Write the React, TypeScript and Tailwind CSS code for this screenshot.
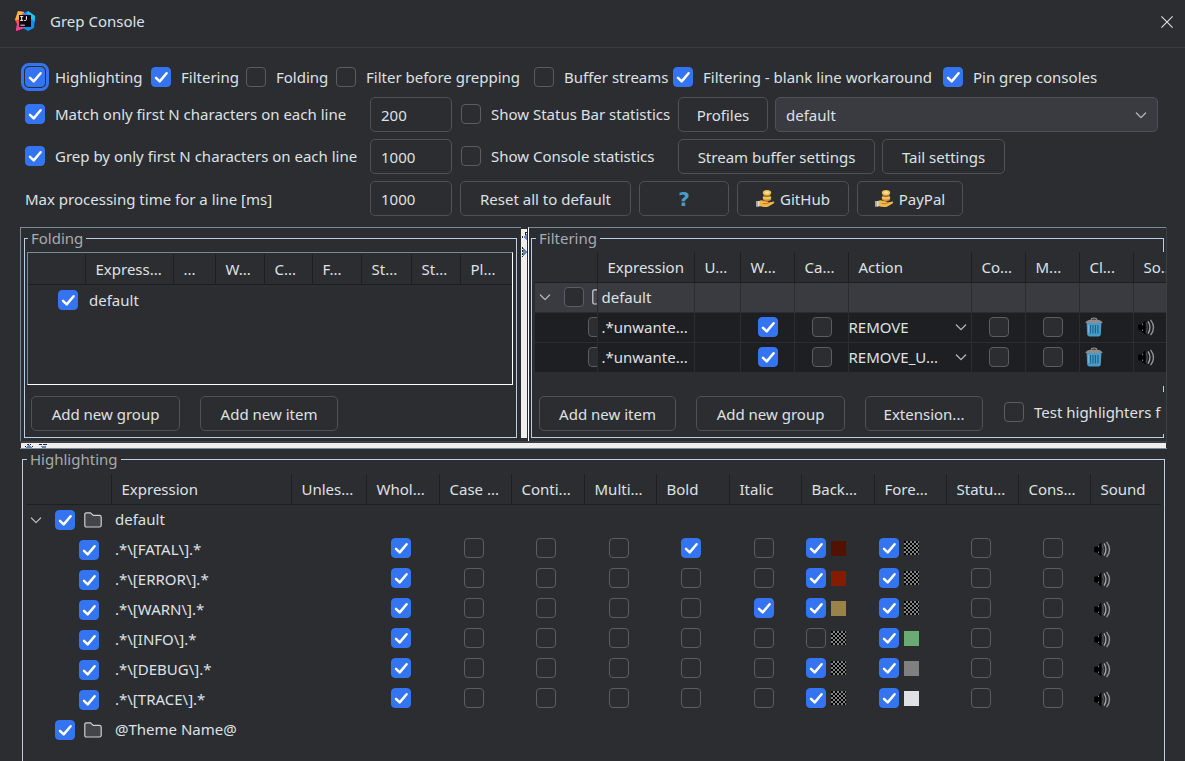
import React from "react";

type CheckProps = {
  label: string;
  checked?: boolean;
  focused?: boolean;
  id?: string;
};

function Check({ label, checked = false, focused = false, id }: CheckProps) {
  return (
    <span className="inline-grid size-5 shrink-0 align-middle">
      <input
        id={id}
        type="checkbox"
        aria-label={id ? undefined : label}
        defaultChecked={checked}
        className={`peer col-start-1 row-start-1 size-5 appearance-none rounded-[4px] border border-[#5a5d63] bg-[#2b2d30] checked:border-[#3574f0] checked:bg-[#3574f0] ${
          focused ? "outline-[3px] outline-offset-1 outline-[#3574f0]" : "outline-none"
        }`}
      />
      <svg
        viewBox="0 0 20 20"
        className="pointer-events-none col-start-1 row-start-1 hidden size-5 peer-checked:block"
        fill="none"
        stroke="#fff"
        strokeWidth="2.5"
        strokeLinecap="round"
        strokeLinejoin="round"
      >
        <path d="M5 10.8 L8.7 14.4 L15.6 6.2" />
      </svg>
    </span>
  );
}

function Option({ id, label, checked, focused }: { id: string; label: string; checked?: boolean; focused?: boolean }) {
  return (
    <div className="flex items-center gap-2.5 whitespace-nowrap">
      <Check id={id} label={label} checked={checked} focused={focused} />
      <label htmlFor={id}>{label}</label>
    </div>
  );
}

function Btn({ className = "", children, label }: { className?: string; children: React.ReactNode; label?: string }) {
  return (
    <button
      type="button"
      aria-label={label}
      className={`flex h-[35px] shrink-0 items-center justify-center gap-1 whitespace-nowrap rounded-[5px] border border-[#4e5157] ${className}`}
    >
      {children}
    </button>
  );
}

function NumberField({ label, value, id }: { label?: string; value: string; id?: string }) {
  return (
    <input
      id={id}
      type="text"
      aria-label={label}
      defaultValue={value}
      className="h-[35px] w-[82px] shrink-0 rounded-[5px] border border-[#4e5157] bg-[#2b2d30] px-2.5 outline-none"
    />
  );
}

function Chevron() {
  return (
    <svg viewBox="0 0 12 12" className="size-3 shrink-0" fill="none" stroke="#b4b8bf" strokeWidth="1.3" strokeLinecap="round" strokeLinejoin="round">
      <path d="M1.4 4 L6 8.6 L10.6 4" />
    </svg>
  );
}

function Folder() {
  return (
    <svg viewBox="0 0 18 16" className="h-4 w-[18px] shrink-0" fill="#43454a" stroke="#ced0d6" strokeWidth="1.2" strokeLinejoin="round">
      <path d="M0.8 2.6 Q0.8 0.8 2.6 0.8 H6.3 L9.2 3.4 H15.4 Q17.2 3.4 17.2 5.2 V13.2 Q17.2 15 15.4 15 H2.6 Q0.8 15 0.8 13.2 Z" />
    </svg>
  );
}

function Speaker() {
  return (
    <svg viewBox="0 0 17 17" className="size-[17px]" fill="none">
      <path d="M0.2 6.4 Q0.2 5.6 1 5.6 H3 L7.4 1.4 V15.6 L3 11.4 H1 Q0.2 11.4 0.2 10.6 Z" fill="#000" />
      <path d="M4.6 4.6 V6.2 M4.6 10.6 V12" stroke="#8a8c8f" strokeWidth="1" />
      <path d="M8.4 3.6 Q10.4 8.5 8.4 13.4" stroke="#55575a" strokeWidth="1" />
      <path d="M10 2.4 Q14 8.5 10 14.6" stroke="#a4a6a8" strokeWidth="1.3" />
      <path d="M12.6 0.8 Q18.4 8.5 12.6 16.2" stroke="#909295" strokeWidth="1.4" />
    </svg>
  );
}

function Trash() {
  return (
    <svg viewBox="0 0 18 20" className="h-5 w-[18px]" fill="none">
      <path d="M6 2.6 Q6.4 1 9 1 Q11.6 1 12 2.6" stroke="#a7a39e" strokeWidth="1.2" />
      <path d="M0.3 6 Q1.4 2.6 9 2.6 Q16.6 2.6 17.7 6 Z" fill="#8f8c89" />
      <path d="M1.6 6 H16.4 L15.8 17.6 Q15.6 19.4 13.8 19.4 H4.2 Q2.4 19.4 2.2 17.6 Z" fill="#4a9cc8" />
      <path d="M5.4 8 V16.6 M7.9 8 V16.6 M10.4 8 V16.6 M12.9 8 V16.6" stroke="#1d5f86" strokeWidth="1.1" />
      <path d="M3.8 8 V16" stroke="#86cdec" strokeWidth="0.8" />
    </svg>
  );
}

function Donate() {
  return (
    <svg viewBox="0 0 20 20" className="size-5 shrink-0" fill="none">
      <ellipse cx="11" cy="10" rx="4.2" ry="2" fill="#c98a2c" />
      <ellipse cx="11" cy="8.6" rx="4.2" ry="2" fill="#f2c260" />
      <ellipse cx="11" cy="6.4" rx="3.4" ry="1.6" fill="#a86f22" />
      <ellipse cx="11" cy="3.8" rx="4.2" ry="2.7" fill="#f0bd58" />
      <ellipse cx="11" cy="3.6" rx="2.4" ry="1.3" fill="#fbe09a" />
      <path d="M3 12 Q5.4 10.6 8 12 L12 12.4 Q13 13 11.8 13.8 L17.6 12.6 Q19 13 17.6 14.4 L12.4 17.4 Q9 18.6 3 17 Z" fill="#f0b64a" />
      <path d="M6.6 14.4 Q9.4 15.4 13 13.8" stroke="#b9761f" strokeWidth="0.9" />
      <path d="M0 12 H3.4 V17.6 H0 Z" fill="#d5d8dc" />
      <path d="M1 12 V17.6" stroke="#6d7074" strokeWidth="0.9" />
    </svg>
  );
}

function AppLogo() {
  return (
    <svg viewBox="0 0 20 20" className="size-5">
      <path d="M2 3 L3 0 L9 1 L14 10 L4 19 L1 20 L2 13 L0 9 Z" fill="#fc4a6c" />
      <path d="M2 3 L3 0 L9 1 L9 8 L0 9 Z" fill="#fdb43a" />
      <path d="M1 20 L2 13 L8 14 L10 17 Z" fill="#f93c93" />
      <path d="M7 3 L13 0 L20 5 L19 17 L13 20 L8 17 Z" fill="#0f8ff2" />
      <path d="M12 3 L13 0 L20 5 L19.6 11 Z" fill="#20c4f4" />
      <path d="M8 2 L12 4 L10 8 L6 6 Z" fill="#9a5fe0" />
      <rect x="4" y="4" width="12" height="12" fill="#0c0208" />
      <path d="M5.2 5.6 H8.2 M6.7 5.6 V9.4 M5.2 9.4 H8.2 M11.4 5.2 V8.4 Q11.4 9.5 10.2 9.5 H9.2" stroke="#fff" strokeWidth="1" fill="none" />
      <path d="M5.4 14.2 H9.8" stroke="#fff" strokeWidth="0.9" />
    </svg>
  );
}

function Swatch({ color }: { color: string | null }) {
  if (color === null) {
    return (
      <svg viewBox="0 0 15 15" className="size-[15px] shrink-0" shapeRendering="crispEdges">
        <defs>
          <pattern id="mesh" width="4" height="4" patternUnits="userSpaceOnUse">
            <rect width="4" height="4" fill="#828282" />
            <rect width="2" height="2" fill="#000" />
            <rect x="2" y="2" width="2" height="2" fill="#000" />
          </pattern>
        </defs>
        <rect width="15" height="14" fill="url(#mesh)" />
      </svg>
    );
  }
  return <span className="size-[15px] shrink-0" style={{ backgroundColor: color }} />;
}

const foldingColumns: [string, string][] = [
  ["", "w-[57px]"],
  ["Express...", "w-[88px]"],
  ["...", "w-[42px]"],
  ["W...", "w-[49px]"],
  ["C...", "w-[48px]"],
  ["F...", "w-[49px]"],
  ["St...", "w-[50px]"],
  ["St...", "w-[49px]"],
  ["Pl...", ""],
];

const filterColumns: [string, string][] = [
  ["", "w-[62px]"],
  ["Expression", "w-[97px]"],
  ["U...", "w-[46px]"],
  ["W...", "w-[54px]"],
  ["Ca...", "w-[54px]"],
  ["Action", "w-[123px]"],
  ["Co...", "w-[54px]"],
  ["M...", "w-[54px]"],
  ["Cl...", "w-[54px]"],
  ["So...", "w-[54px]"],
];

const highlightColumns: [string, string][] = [
  ["", "w-[85px]"],
  ["Expression", "w-[180px]"],
  ["Unles...", "w-[75px]"],
  ["Whol...", "w-[73px]"],
  ["Case ...", "w-[72px]"],
  ["Conti...", "w-[73px]"],
  ["Multi...", "w-[72px]"],
  ["Bold", "w-[73px]"],
  ["Italic", "w-[72px]"],
  ["Back...", "w-[73px]"],
  ["Fore...", "w-[72px]"],
  ["Statu...", "w-[72px]"],
  ["Cons...", "w-[72px]"],
  ["Sound", ""],
];

function HeaderRow({ columns }: { columns: [string, string][] }) {
  return (
    <thead>
      <tr className="h-[30px] border-b border-[#1e1f22]">
        {columns.map(([name, width], i) => (
          <th
            key={i}
            className={`${width} overflow-hidden whitespace-nowrap border-r border-[#1e1f22] pl-2.5 text-left font-normal last:border-r-0`}
          >
            {name}
          </th>
        ))}
      </tr>
    </thead>
  );
}

type Rule = { expr: string; bold?: boolean; italic?: boolean; bgOn: boolean; bg: string | null; fg: string | null };

const rules: Rule[] = [
  { expr: ".*\\[FATAL\\].*", bold: true, bgOn: true, bg: "#521200", fg: null },
  { expr: ".*\\[ERROR\\].*", bgOn: true, bg: "#851b00", fg: null },
  { expr: ".*\\[WARN\\].*", italic: true, bgOn: true, bg: "#9a8349", fg: null },
  { expr: ".*\\[INFO\\].*", bgOn: false, bg: null, fg: "#6aab73" },
  { expr: ".*\\[DEBUG\\].*", bgOn: true, bg: null, fg: "#808080" },
  { expr: ".*\\[TRACE\\].*", bgOn: true, bg: null, fg: "#dfe1e5" },
];

function CenterCheck({ label, checked }: { label: string; checked?: boolean }) {
  return (
    <td className="pb-0.5 pr-[3px]">
      <div className="flex justify-center">
        <Check label={label} checked={checked} />
      </div>
    </td>
  );
}

function RuleRow({ rule }: { rule: Rule }) {
  return (
    <tr className="h-[30px]">
      <td className="pl-[53px] pt-0.5">
        <div className="flex">
          <Check label={`${rule.expr} enabled`} checked />
        </div>
      </td>
      <td className="pl-1">{rule.expr}</td>
      <td />
      <CenterCheck label="Whole line" checked />
      <CenterCheck label="Case insensitive" />
      <CenterCheck label="Continue matching" />
      <CenterCheck label="Multiline" />
      <CenterCheck label="Bold" checked={rule.bold} />
      <CenterCheck label="Italic" checked={rule.italic} />
      <td className="pb-0.5 pl-[5px]">
        <div className="flex items-center gap-[5px]">
          <Check label="Background" checked={rule.bgOn} />
          <Swatch color={rule.bg} />
        </div>
      </td>
      <td className="pb-0.5 pl-[5px]">
        <div className="flex items-center gap-[5px]">
          <Check label="Foreground" checked />
          <Swatch color={rule.fg} />
        </div>
      </td>
      <CenterCheck label="Status bar count" />
      <CenterCheck label="Console count" />
      <td className="pl-1">
        <Speaker />
      </td>
    </tr>
  );
}

function GroupRow({ name, open }: { name: string; open?: boolean }) {
  return (
    <tr className="h-[30px]">
      <td className="pl-1 pt-0.5">
        <div className="flex items-center">
          <span className="mr-[13px] flex w-3">{open && <Chevron />}</span>
          <Check label={`${name} enabled`} checked />
          <span className="ml-[9px]">
            <Folder />
          </span>
        </div>
      </td>
      <td className="pl-1" colSpan={13}>
        {name}
      </td>
    </tr>
  );
}

function FilterCheck({ label, checked }: { label: string; checked?: boolean }) {
  return (
    <td className="border-b border-r border-[#2b2d30] pl-0.5">
      <div className="flex justify-center">
        <Check label={label} checked={checked} />
      </div>
    </td>
  );
}

function FilterRow({ action }: { action: string }) {
  const cell = "border-b border-r border-[#2b2d30]";
  return (
    <tr className="h-[30px] bg-[#1e1f22]">
      <td className={`${cell} overflow-hidden`}>
        <div className="flex overflow-hidden pl-[53px]">
          <Check label="Filter enabled" />
        </div>
      </td>
      <td className={`${cell} pl-1`}>.*unwante...</td>
      <td className={cell} />
      <FilterCheck label="Whole line" checked />
      <FilterCheck label="Case insensitive" />
      <td className={cell}>
        <div className="grid items-center">
          <select
            aria-label="Action"
            className="col-start-1 row-start-1 w-full appearance-none bg-transparent outline-none"
            defaultValue={action}
          >
            <option className="bg-[#2b2d30]">{action}</option>
          </select>
          <span className="pointer-events-none col-start-1 row-start-1 mr-1 justify-self-end">
            <Chevron />
          </span>
        </div>
      </td>
      <FilterCheck label="Continue matching" />
      <FilterCheck label="Multiline" />
      <td className={`${cell} pl-[5px]`}>
        <Trash />
      </td>
      <td className={`${cell} pl-1`}>
        <Speaker />
      </td>
    </tr>
  );
}

export default function App() {
  return (
    <div className="flex h-screen flex-col overflow-hidden bg-[#2b2d30] font-['Noto_Sans','Open_Sans',sans-serif] text-[15px] leading-5 text-[#dfe1e5]">
      <header className="flex h-12 shrink-0 items-center border-b border-[#393b40] pb-1.5 pl-[15px] pr-3">
        <AppLogo />
        <h1 className="ml-[15px] flex-1">Grep Console</h1>
        <button type="button" aria-label="Close" className="flex pt-0.5">
          <svg viewBox="0 0 12 12" className="size-3" stroke="#dfe1e5" strokeWidth="1.1">
            <path d="M0.4 0.4 L11.6 11.6 M11.6 0.4 L0.4 11.6" />
          </svg>
        </button>
      </header>

      <section className="flex shrink-0 flex-col gap-[7px] pb-[11px] pl-[25px] pr-[27px] pt-[19px]">
        <div className="mb-[3px] grid grid-cols-[126px_95px_90px_198px_139px_270px_1fr]">
          <Option id="highlighting" label="Highlighting" checked focused />
          <Option id="filtering" label="Filtering" checked />
          <Option id="folding" label="Folding" />
          <Option id="before" label="Filter before grepping" />
          <Option id="buffer" label="Buffer streams" />
          <Option id="blank" label="Filtering - blank line workaround" checked />
          <Option id="pin" label="Pin grep consoles" checked />
        </div>

        <div className="flex items-center">
          <div className="w-[345px] shrink-0 pb-0.5">
            <Option id="match" label="Match only first N characters on each line" checked />
          </div>
          <NumberField label="Match characters" value="200" />
          <div className="ml-[9px] w-[217px] shrink-0 pb-0.5">
            <Option id="statusbar" label="Show Status Bar statistics" />
          </div>
          <Btn className="w-[90px]">Profiles</Btn>
          <div className="ml-[7px] grid min-w-0 flex-1 items-center">
            <select
              aria-label="Profile"
              defaultValue="default"
              className="col-start-1 row-start-1 h-[35px] w-full appearance-none rounded-[5px] border border-[#4e5157] bg-[#393b40] px-2.5 outline-none"
            >
              <option>default</option>
            </select>
            <span className="pointer-events-none col-start-1 row-start-1 mr-[11px] justify-self-end">
              <Chevron />
            </span>
          </div>
        </div>

        <div className="flex items-center">
          <div className="w-[345px] shrink-0 pb-0.5">
            <Option id="grep" label="Grep by only first N characters on each line" checked />
          </div>
          <NumberField label="Grep characters" value="1000" />
          <div className="ml-[9px] w-[217px] shrink-0 pb-0.5">
            <Option id="consolestats" label="Show Console statistics" />
          </div>
          <Btn className="w-[197px]">Stream buffer settings</Btn>
          <Btn className="ml-[7px] w-[123px]">Tail settings</Btn>
        </div>

        <div className="flex items-center gap-2">
          <label htmlFor="maxtime" className="-mr-2 w-[345px] shrink-0">
            Max processing time for a line [ms]
          </label>
          <NumberField id="maxtime" value="1000" />
          <Btn className="w-[171px]">Reset all to default</Btn>
          <Btn className="w-[90px]" label="Help">
            <span className="font-['DejaVu_Sans'] text-xl font-bold text-[#4a9cc8]">?</span>
          </Btn>
          <Btn className="w-[112px]">
            <Donate /> GitHub
          </Btn>
          <Btn className="w-[106px]">
            <Donate /> PayPal
          </Btn>
        </div>
      </section>

      <div className="ml-5 mr-[18px] flex shrink-0 flex-col">
        <div className="flex border-r border-[#3c3f44]">
          <div className="w-[501px] shrink-0 border-l border-t border-[#7a8a99] pb-[3px] pl-[3px] pr-1">
            <fieldset className="min-w-0 border border-[#b8cfe5] pb-[3px]">
              <legend className="ml-[3px] px-[3px] text-[#a9abaf]">Folding</legend>
              <div className="ml-0.5 mr-[3px] mt-1 h-[133px] border border-b-white border-l-[#7a8a99] border-r-white border-t-[#7a8a99] pt-px">
                <table className="w-full table-fixed border-collapse">
                  <HeaderRow columns={foldingColumns} />
                  <tbody>
                    <tr className="h-8">
                      <td className="pl-[30px]">
                        <div className="flex">
                          <Check label="default enabled" checked />
                        </div>
                      </td>
                      <td className="pl-1" colSpan={8}>
                        default
                      </td>
                    </tr>
                  </tbody>
                </table>
              </div>
              <div className="mt-1.5 flex gap-5 pb-[3px] pl-1.5 pt-[5px]">
                <Btn className="w-[149px]">Add new group</Btn>
                <Btn className="w-[138px]">Add new item</Btn>
              </div>
            </fieldset>
          </div>

          <div className="mb-0.5 mt-0.5 w-1.5 shrink-0 border-b border-[#2b2d30] bg-[#eee]">
            <svg viewBox="0 0 6 30" className="h-[30px] w-1.5" shapeRendering="crispEdges">
              <path d="M1.5 7 V9 M4 3 H5 V5 H4 Z M1.5 18 V28" stroke="#222" strokeDasharray="2 1" />
              <path d="M6 4 V12 L2 8 Z M2 19 V27 L6 23 Z" fill="#6382bf" />
            </svg>
          </div>

          <div className="ml-px min-w-0 flex-1 overflow-hidden border-l border-t border-l-white border-t-[#7a8a99] pb-[3px] pl-0.5 pr-0.5">
            <fieldset className="min-w-0 border border-[#b8cfe5] pb-[3px]">
              <legend className="ml-1 px-[3px] text-[#a9abaf]">Filtering</legend>
              <div className="-mr-[3px] ml-[3px] mt-1 h-[134px] overflow-hidden bg-[#2b2d30]">
                <table className="w-[652px] table-fixed border-collapse">
                  <HeaderRow columns={filterColumns} />
                  <tbody>
                    <tr className="h-[30px] bg-[#393b40] [&>td]:border-b [&>td]:border-r [&>td]:border-[#2b2d30]">
                      <td className="overflow-hidden">
                        <div className="flex items-center overflow-hidden pl-1">
                          <Chevron />
                          <span className="ml-[13px] mr-2 flex">
                            <Check label="default enabled" />
                          </span>
                          <Folder />
                        </div>
                      </td>
                      <td className="pl-1">default</td>
                      <td />
                      <td />
                      <td />
                      <td />
                      <td />
                      <td />
                      <td />
                      <td />
                    </tr>
                    <FilterRow action="REMOVE" />
                    <FilterRow action="REMOVE_U..." />
                  </tbody>
                </table>
              </div>
              <div className="-mr-[3px] mt-1.5 flex items-center overflow-hidden bg-[#2b2d30] pb-[3px] pl-[7px] pt-1">
                <Btn className="w-[137px]">Add new item</Btn>
                <Btn className="ml-5 w-[149px]">Add new group</Btn>
                <Btn className="ml-5 w-[118px]">Extension...</Btn>
                <div className="ml-[21px] pb-1">
                  <Option id="test" label="Test highlighters f" />
                </div>
              </div>
            </fieldset>
          </div>
        </div>

        <div className="border-b border-t-2 border-b-[#7a8a99] border-t-[#3c3f44]">
          <div className="ml-px mr-px h-[5px] bg-[#eee]">
            <svg viewBox="0 0 30 5" className="h-[5px] w-[30px]" shapeRendering="crispEdges">
              <path d="M6 1.5 H8 M9 1.5 H10 M18 1.5 H21 M22 1.5 H26 M4 3.5 H5 M11 3.5 H12" stroke="#222" />
              <path d="M4 5 L8 2 L12 5 Z M19 3 H25 V5 H21 Z" fill="#6382bf" />
            </svg>
          </div>
        </div>
      </div>

      <fieldset className="ml-[22px] mr-5 min-w-0 flex-1 border border-b-0 border-[#b8cfe5] pl-[3px] pr-[3px]">
        <legend className="ml-px px-[3px] text-[#a9abaf]">Highlighting</legend>
        <table className="mt-[5px] w-full table-fixed border-collapse">
          <HeaderRow columns={highlightColumns} />
          <tbody>
            <GroupRow name="default" open />
            {rules.map((rule) => (
              <RuleRow key={rule.expr} rule={rule} />
            ))}
            <GroupRow name="@Theme Name@" />
          </tbody>
        </table>
      </fieldset>
    </div>
  );
}
